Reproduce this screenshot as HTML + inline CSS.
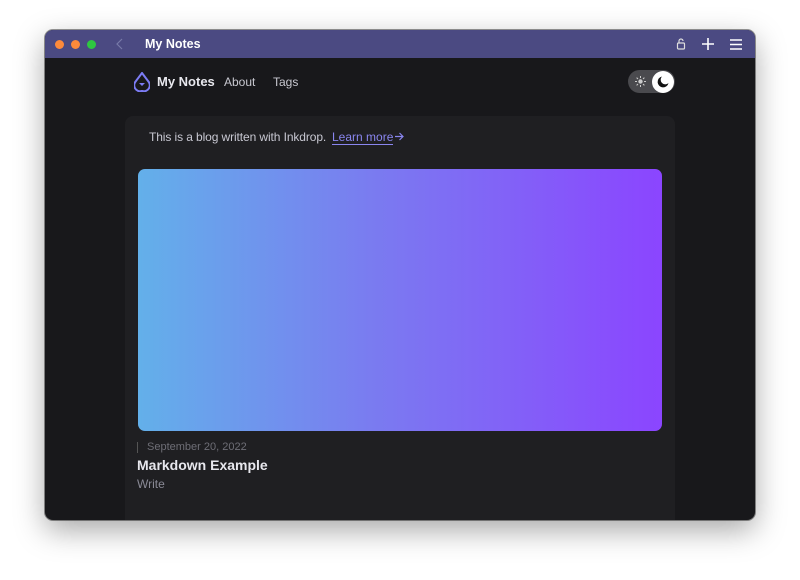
<!DOCTYPE html><html><head><style>
body{margin:0;width:800px;height:580px;background:#fff;font-family:"Liberation Sans",sans-serif;overflow:hidden;position:relative}
.win{position:absolute;left:45px;top:30px;width:710px;height:490px;border-radius:8px;overflow:hidden;background:#18181b;box-shadow:0 10px 30px rgba(0,0,0,.35),0 0 0 1px rgba(0,0,0,.4)}
.tb{position:absolute;left:0;top:0;width:710px;height:28px;background:#4b4a82;color:#fff}
.dot{position:absolute;top:10px;width:9px;height:9px;border-radius:50%}
.t{position:absolute;font-size:13px;white-space:nowrap}
.card{position:absolute;left:80px;top:86px;width:550px;height:420px;background:#1f1f22;border-radius:8px}
.img{position:absolute;left:93px;top:139px;width:524px;height:262px;border-radius:7px;background:linear-gradient(90deg,#63b0ea,#7a7bf0 45%,#8b45ff)}
</style></head><body><div class="win">
<div class="tb">
<div class="dot" style="left:10px;background:#fd8a3b"></div><div class="dot" style="left:26px;background:#fd8a3b"></div><div class="dot" style="left:42px;background:#2ec840"></div>
<svg style="position:absolute;left:71px;top:8px" width="7" height="12"><path d="M6 1L1 6l5 5" fill="none" stroke="#777aa8" stroke-width="1.2"/></svg>
<div class="t" style="left:100px;top:7px;font-weight:bold;font-size:12.5px">My Notes</div>
<svg style="position:absolute;left:631px;top:8px" width="10" height="12" viewBox="0 0 10 12"><rect x="1.5" y="5" width="7" height="6" rx="1" fill="none" stroke="#ddd" stroke-width="1.2"/><path d="M3 5V3a2 2 0 0 1 4 0" fill="none" stroke="#ddd" stroke-width="1.2"/></svg>
<svg style="position:absolute;left:657px;top:8px" width="12" height="12"><path d="M6 0v12M0 6h12" stroke="#fff" stroke-width="1.6"/></svg>
<svg style="position:absolute;left:685px;top:9px" width="12" height="11"><path d="M0 1h12M0 5.5h12M0 10h12" stroke="#fff" stroke-width="1.6"/></svg>
</div>
<svg style="position:absolute;left:89px;top:42px" width="16" height="20" viewBox="0 0 16 20"><path d="M8 1L14 9a6 6 0 0 1-6 10A6 6 0 0 1 2 9Z" fill="none" stroke="#7c7cf5" stroke-width="2"/><path d="M5 11h6l-3 3z" fill="#7c7cf5"/></svg>
<div class="t" style="left:112px;top:44px;color:#e8e8ee;font-weight:bold;font-size:13px">My Notes</div>
<div class="t" style="left:179px;top:45px;color:#c8c8d0;font-size:12px">About</div>
<div class="t" style="left:228px;top:45px;color:#c8c8d0;font-size:12px">Tags</div>
<div style="position:absolute;left:583px;top:40px;width:47px;height:23px;border-radius:12px;background:#4a4a4e"></div>
<svg style="position:absolute;left:590px;top:46px" width="11" height="11" viewBox="0 0 11 11"><circle cx="5.5" cy="5.5" r="2.2" fill="#ccc"/><path d="M5.5 0v2M5.5 9v2M0 5.5h2M9 5.5h2M1.6 1.6l1.4 1.4M8 8l1.4 1.4M1.6 9.4L3 8M8 3l1.4-1.4" stroke="#ccc" stroke-width="1"/></svg>
<div style="position:absolute;left:607px;top:41px;width:22px;height:22px;border-radius:50%;background:#fff"></div>
<svg style="position:absolute;left:612px;top:46px" width="12" height="12" viewBox="0 0 12 12"><path d="M5 0.5a5.5 5.5 0 1 0 6.5 6.5A4.5 4.5 0 0 1 5 0.5Z" fill="#111"/></svg>
<div class="card"></div>
<div class="t" style="left:104px;top:100px;color:#c8c8d2;font-size:12px;letter-spacing:-0.1px">This is a blog written with Inkdrop.</div>
<div class="t" style="left:287px;top:100px;color:#8a86f0;font-size:12px;border-bottom:1px solid #8a86f0">Learn more</div>
<svg style="position:absolute;left:350px;top:102px" width="9" height="9"><path d="M0 4.5h8M4.5 1l3.5 3.5L4.5 8" fill="none" stroke="#8a86f0" stroke-width="1.2"/></svg>
<div class="img"></div>
<div style="position:absolute;left:92px;top:412px;width:1px;height:11px;background:#555"></div>
<div class="t" style="left:102px;top:411px;color:#6e6e76;font-size:11px">September 20, 2022</div>
<div class="t" style="left:92px;top:427px;color:#e8e8ee;font-weight:bold;font-size:14px">Markdown Example</div>
<div class="t" style="left:92px;top:447px;color:#8a8a96;font-size:12px">Write</div>
</div></body></html>
